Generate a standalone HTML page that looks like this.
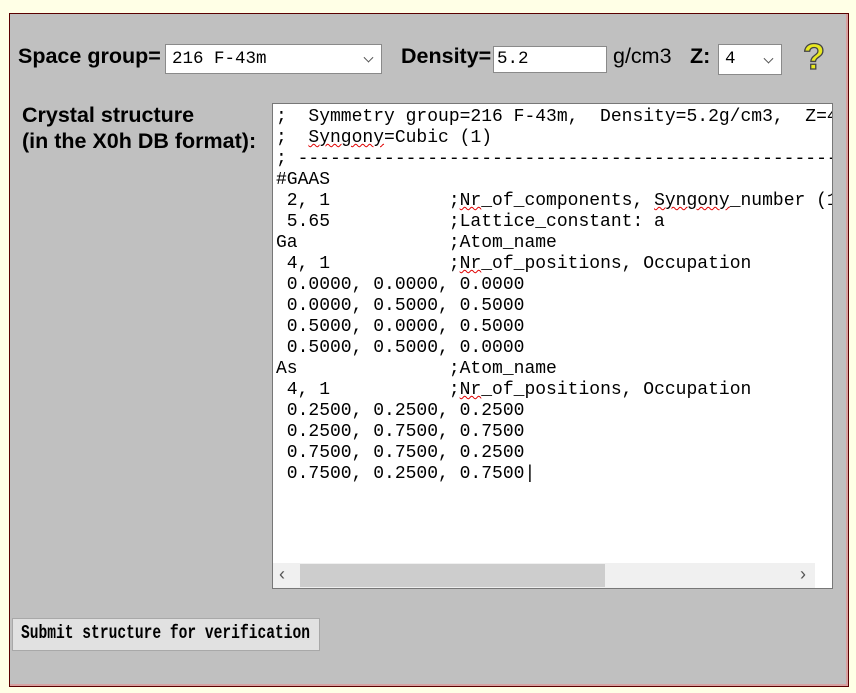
<!DOCTYPE html>
<html><head><style>
body{margin:0;background:#ffffe6;width:856px;height:693px;position:relative;overflow:hidden;font-family:"Liberation Sans",Arial,sans-serif}
#panel{position:absolute;left:9px;top:13px;width:838px;height:672px;background:#c0c0c0;border:1px solid #5a0000;box-shadow:inset -2px -2px 0 #d8a0a0}
.lbl{position:absolute;font-weight:bold;font-size:21.5px;color:#000}
.sel{position:absolute;background:#fff;border:1px solid #8a8a8a;font-family:"Liberation Mono",monospace;font-size:17.5px;box-sizing:border-box;padding-left:6px}
.chev{position:absolute;right:9px;top:50%;width:6px;height:6px;border-right:1px solid #555;border-bottom:1px solid #555;transform:translateY(-70%) rotate(45deg)}
#ta{position:absolute;left:272px;top:103px;width:561px;height:486px;background:#fff;border:1px solid #777;box-sizing:border-box;overflow:hidden}
#ta pre{margin:0;position:absolute;left:3px;top:3px;font-family:"Liberation Mono","Courier New",monospace;font-size:18px;line-height:21px;color:#000}
.sq{text-decoration:underline wavy #e00000;text-decoration-thickness:1px}
#hs{position:absolute;left:0;top:459px;width:542px;height:25px;background:#f0f0f0}
#thumb{position:absolute;left:27px;top:1px;width:305px;height:23px;background:#cdcdcd}
#btn{position:absolute;left:12px;top:618px;width:308px;height:33px;background:#e1e1e1;border:1px solid #a8a8a8;box-sizing:border-box}
#btn span{position:absolute;left:8px;top:4px;font-family:"Liberation Mono",monospace;font-weight:bold;font-size:14.6px;line-height:22px;transform:scaleY(1.35);transform-origin:0 50%;white-space:nowrap}
</style></head><body>
<div id="panel"></div>
<div class="lbl" style="left:18px;top:44px">Space group=</div>
<div class="sel" style="left:165px;top:44px;width:217px;height:30px;line-height:28px">216 F-43m<span class="chev"></span></div>
<div class="lbl" style="left:401px;top:44px">Density=</div>
<div class="sel" style="left:493px;top:46px;width:114px;height:27px;line-height:25px;padding-left:3px">5.2</div>
<div style="position:absolute;left:613px;top:44px;font-size:21.5px">g/cm3</div>
<div class="lbl" style="left:690px;top:44px">Z:</div>
<div class="sel" style="left:718px;top:44px;width:64px;height:31px;line-height:29px">4<span class="chev"></span></div>
<div style="position:absolute;left:803px;top:36px;font-size:36px;font-weight:bold;color:#e8e820;-webkit-text-stroke:1.3px #444;font-family:'Liberation Sans',sans-serif">?</div>
<div class="lbl" style="left:22px;top:102px;line-height:26px">Crystal structure<br>(in the X0h DB format):</div>
<div id="ta"><pre>;  Symmetry group=216 F-43m,  Density=5.2g/cm3,  Z=4
;  <span class="sq">Syngony</span>=Cubic (1)
; -----------------------------------------------------
#GAAS
 2, 1           ;<span class="sq">Nr</span>_of_components, <span class="sq">Syngony</span>_number (1
 5.65           ;Lattice_constant: a
Ga              ;Atom_name
 4, 1           ;<span class="sq">Nr</span>_of_positions, Occupation
 0.0000, 0.0000, 0.0000
 0.0000, 0.5000, 0.5000
 0.5000, 0.0000, 0.5000
 0.5000, 0.5000, 0.0000
As              ;Atom_name
 4, 1           ;<span class="sq">Nr</span>_of_positions, Occupation
 0.2500, 0.2500, 0.2500
 0.2500, 0.7500, 0.7500
 0.7500, 0.7500, 0.2500
 0.7500, 0.2500, 0.7500|</pre>
<div id="hs"><div id="thumb"></div><span style="position:absolute;left:6px;top:1px;font-size:18px;color:#555">‹</span><span style="position:absolute;right:9px;top:1px;font-size:18px;color:#555">›</span></div>
</div>
<div id="btn"><span>Submit structure for verification</span></div>
</body></html>
